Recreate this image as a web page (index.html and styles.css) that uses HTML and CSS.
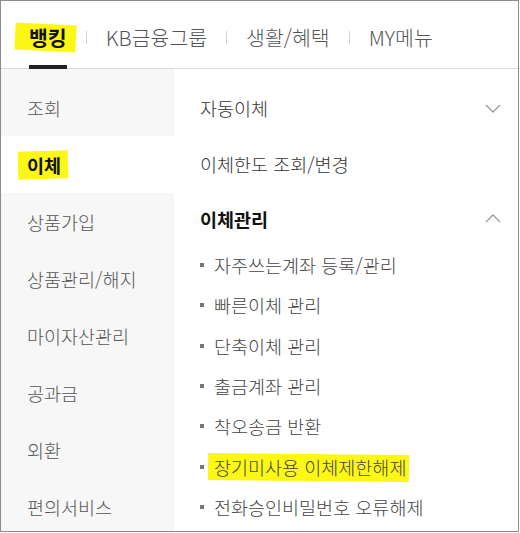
FILE: index.html
```html
<!DOCTYPE html>
<html lang="ko">
<head>
<meta charset="utf-8">
<link rel="stylesheet" href="styles.css">
</head>
<body>
<div class="frame">
  <nav class="tabs">
    <div class="tab active"><span class="hl hl-tab">뱅킹</span></div>
    <span class="sep"></span>
    <div class="tab">KB금융그룹</div>
    <span class="sep"></span>
    <div class="tab">생활/혜택</div>
    <span class="sep"></span>
    <div class="tab">MY메뉴</div>
  </nav>
  <div class="body">
    <ul class="side">
      <li class="side-item">조회</li>
      <li class="side-item active"><span class="hl hl-side">이체</span></li>
      <li class="side-item">상품가입</li>
      <li class="side-item">상품관리/해지</li>
      <li class="side-item">마이자산관리</li>
      <li class="side-item">공과금</li>
      <li class="side-item">외환</li>
      <li class="side-item">편의서비스</li>
    </ul>
    <div class="content">
      <div class="group">
        <span>자동이체</span>
        <svg class="chev" width="16" height="9" viewBox="0 0 16 9"><polyline points="1,1 8,8 15,1" fill="none" stroke="#9a9a9a" stroke-width="1.3"/></svg>
      </div>
      <div class="group">
        <span>이체한도 조회/변경</span>
      </div>
      <div class="group open">
        <span>이체관리</span>
        <svg class="chev" width="16" height="9" viewBox="0 0 16 9"><polyline points="1,8 8,1 15,8" fill="none" stroke="#9a9a9a" stroke-width="1.3"/></svg>
      </div>
      <ul class="sub">
        <li class="sub-item">자주쓰는계좌 등록/관리</li>
        <li class="sub-item">빠른이체 관리</li>
        <li class="sub-item">단축이체 관리</li>
        <li class="sub-item">출금계좌 관리</li>
        <li class="sub-item">착오송금 반환</li>
        <li class="sub-item"><span class="hl hl-sub">장기미사용 이체제한해제</span></li>
        <li class="sub-item">전화승인비밀번호 오류해제</li>
      </ul>
    </div>
  </div>
</div>
</body>
</html>
```

FILE: styles.css
```css
* { box-sizing: border-box; }
html, body { margin: 0; padding: 0; background: #fff; }
body {
  font-family: "Noto Sans CJK KR", "Noto Sans", sans-serif;
  color: #444;
}
ul { list-style: none; margin: 0; padding: 0; }

.frame {
  width: 519px;
  height: 532px;
  border: 1px solid #8c8c8c;
  overflow: hidden;
  display: flex;
  flex-direction: column;
}

.tabs {
  height: 68px;
  flex: none;
  display: flex;
  align-items: stretch;
  padding-left: 28px;
  border-bottom: 1px solid #dcdcdc;
}
.tab {
  position: relative;
  display: flex;
  align-items: center;
  padding-top: 5px;
  font-size: 20.5px;
  line-height: 24px;
  color: #555;
  font-weight: 300;
}
.tab.active {
  color: #111;
  font-weight: 700;
}
.tab.active::after {
  content: "";
  position: absolute;
  left: 0;
  right: 0;
  bottom: -1px;
  height: 4px;
  background: #222;
}
.sep {
  align-self: center;
  margin: 5px 19px 0;
  width: 1px;
  height: 13px;
  background: #d2d2d2;
}

.hl { position: relative; z-index: 0; }
.hl::before {
  content: "";
  position: absolute;
  z-index: -1;
  background: #fdf716;
}
.hl-tab::before {
  left: -14px; right: -9px; top: -1px; bottom: -2px;
  transform: rotate(3deg);
}
.hl-side::before {
  left: -9px; right: -7px; top: -1px; bottom: -1px;
  transform: rotate(-1.5deg);
}
.hl-sub::before {
  left: -6px; right: -3px; top: 0px; bottom: -1px;
  transform: rotate(0.6deg);
}

.body {
  flex: 1;
  display: flex;
  min-height: 0;
}
.side {
  width: 173px;
  flex: none;
  background: #f7f7f7;
  padding-top: 10px;
}
.side-item {
  height: 57px;
  display: flex;
  align-items: center;
  padding-left: 26px;
  font-size: 18.5px;
  font-weight: 300;
  color: #555;
}
.side-item.active {
  background: #fff;
  color: #111;
  font-weight: 700;
}

.content {
  flex: 1;
  padding: 11px 17px 0 26px;
}
.group {
  height: 56px;
  display: flex;
  align-items: center;
  justify-content: space-between;
  font-size: 18.5px;
  font-weight: 300;
  color: #333;
}
.group.open {
  height: 53px;
  font-weight: 700;
  color: #111;
}
.chev { display: block; }

.sub-item {
  height: 40.3px;
  display: flex;
  align-items: center;
  font-size: 18.5px;
  font-weight: 300;
  color: #444;
}
.sub-item::before {
  content: "";
  width: 4px;
  height: 4px;
  background: #777;
  margin-right: 10px;
  flex: none;
}
```
